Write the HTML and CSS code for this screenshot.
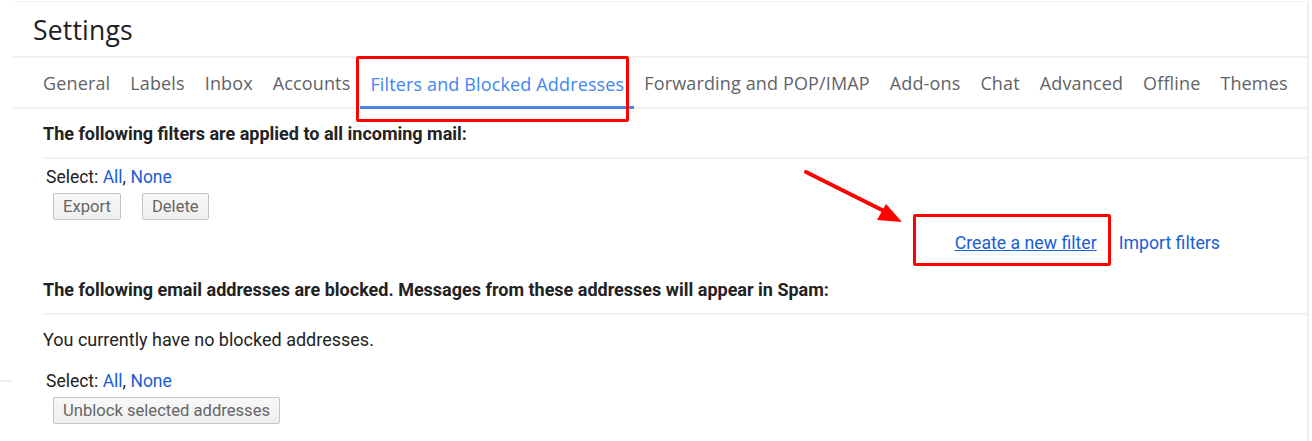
FILE: index.html
```html
<!DOCTYPE html>
<html>
<head>
<meta charset="utf-8">
<link rel="stylesheet" href="styles.css">
</head>
<body>
<div class="page">
  <div class="header"><h1 class="title">Settings</h1></div>
  <nav class="tabs">
    <span class="tab">General</span>
    <span class="tab">Labels</span>
    <span class="tab">Inbox</span>
    <span class="tab">Accounts</span>
    <span class="tab active">Filters and Blocked Addresses</span>
    <span class="tab">Forwarding and POP/IMAP</span>
    <span class="tab">Add-ons</span>
    <span class="tab">Chat</span>
    <span class="tab">Advanced</span>
    <span class="tab">Offline</span>
    <span class="tab">Themes</span>
  </nav>
  <div class="section-head">The following filters are applied to all incoming mail:</div>
  <div class="block first">
    <div class="select">Select: <a class="link">All</a>, <a class="link">None</a></div>
    <div class="buttons">
      <button class="btn">Export</button>
      <button class="btn">Delete</button>
    </div>
    <div class="actions">
      <a class="link underline">Create a new filter</a>
      <a class="link">Import filters</a>
    </div>
  </div>
  <div class="section-head second">The following email addresses are blocked. Messages from these addresses will appear in Spam:</div>
  <div class="block second-block">
    <div class="empty">You currently have no blocked addresses.</div>
    <div class="select lower">Select: <a class="link">All</a>, <a class="link">None</a></div>
    <div class="buttons">
      <button class="btn">Unblock selected addresses</button>
    </div>
  </div>
</div>
<div class="stub"></div>
<div class="mark mark-tab"></div>
<div class="mark mark-create"></div>
<svg class="arrow" width="120" height="70" viewBox="0 0 120 70">
  <line x1="6" y1="4" x2="88" y2="45" stroke="#ff0000" stroke-width="4" stroke-linecap="round"/>
  <polygon points="102,54 77,52 86,36" fill="#ff0000"/>
</svg>
</body>
</html>
```

FILE: styles.css
```css
html, body {
  margin: 0;
  padding: 0;
  background: #fff;
}
body {
  position: relative;
  width: 1312px;
  height: 441px;
  overflow: hidden;
  font-family: Roboto, "Liberation Sans", Arial, sans-serif;
  color: #222;
}
.page {
  margin-left: 13px;
  width: 1296px;
  height: 441px;
  border-top: 1px solid #f1f1f1;
  border-right: 2px solid #eeeeee;
  box-sizing: border-box;
  margin-top: 1px;
}
.header {
  height: 56px;
  border-bottom: 2px solid #f1f1f1;
  box-sizing: border-box;
  display: flex;
  align-items: center;
  padding-left: 20px;
  padding-top: 2px;
}
.title {
  margin: 0;
  font-family: "Open Sans", Roboto, sans-serif;
  font-weight: 400;
  font-size: 26.5px;
  color: #202124;
  letter-spacing: 0.2px;
}
.tabs {
  height: 51px;
  border-bottom: 2px solid #f1f1f1;
  box-sizing: border-box;
  display: flex;
  align-items: stretch;
  padding-left: 30px;
  gap: 20px;
}
.tab {
  display: flex;
  align-items: center;
  font-family: "Open Sans", Roboto, sans-serif;
  font-size: 18px;
  letter-spacing: 0.14px;
  color: #5f6368;
  border-bottom: 3px solid transparent;
  padding: 3px 0 0;
  white-space: nowrap;
}
.tab.active {
  color: #4285f4;
  border-bottom-color: #4a86e8;
  padding: 3px 10px 0 10px;
  margin-right: -10px;
  margin-left: -10px;
  margin-bottom: -2px;
}
.section-head {
  height: 50px;
  border-bottom: 2px solid #f1f1f1;
  box-sizing: border-box;
  margin-left: 30px;
  display: flex;
  align-items: center;
  font-weight: 700;
  font-size: 18px;
  color: #222;
  padding-top: 1px;
  white-space: nowrap;
}
.section-head.second {
  height: 55px;
  padding-top: 5px;
}
.block {
  margin-left: 30px;
  display: flex;
  flex-direction: column;
}
.block.first {
  margin-bottom: 5px;
}
.select {
  font-size: 17.5px;
  color: #222;
  margin-left: 3px;
  height: 20px;
  margin-top: 8px;
  line-height: 20px;
}
.link {
  color: #1a5dd6;
  cursor: pointer;
}
.link.underline {
  text-decoration: underline;
}
.buttons {
  display: flex;
  gap: 21px;
  margin-left: 10px;
  margin-top: 6px;
}
.btn {
  font-family: Roboto, "Liberation Sans", Arial, sans-serif;
  font-size: 16.6px;
  color: #666;
  background: linear-gradient(#f8f8f8, #efefef);
  border: 1px solid #c4c4c4;
  border-radius: 2px;
  height: 27px;
  padding: 0 9px;
  line-height: 25px;
}
.actions {
  display: flex;
  justify-content: flex-end;
  gap: 22px;
  padding-right: 87px;
  margin-top: 11px;
  font-size: 17.7px;
  height: 24px;
  line-height: 24px;
}
.empty {
  font-size: 18px;
  color: #222;
  margin-top: 15px;
  height: 20px;
  line-height: 20px;
}
.select.lower {
  margin-top: 21px;
}
.stub {
  position: absolute;
  left: 0;
  top: 380px;
  width: 12px;
  height: 2px;
  background: #eeeeee;
}
.mark {
  position: absolute;
  border: 3px solid #ff0000;
  border-radius: 2px;
  box-sizing: border-box;
}
.mark-tab {
  left: 356px;
  top: 56px;
  width: 273px;
  height: 66px;
}
.mark-create {
  left: 913px;
  top: 214px;
  width: 198px;
  height: 52px;
}
.arrow {
  position: absolute;
  left: 800px;
  top: 168px;
}
```
